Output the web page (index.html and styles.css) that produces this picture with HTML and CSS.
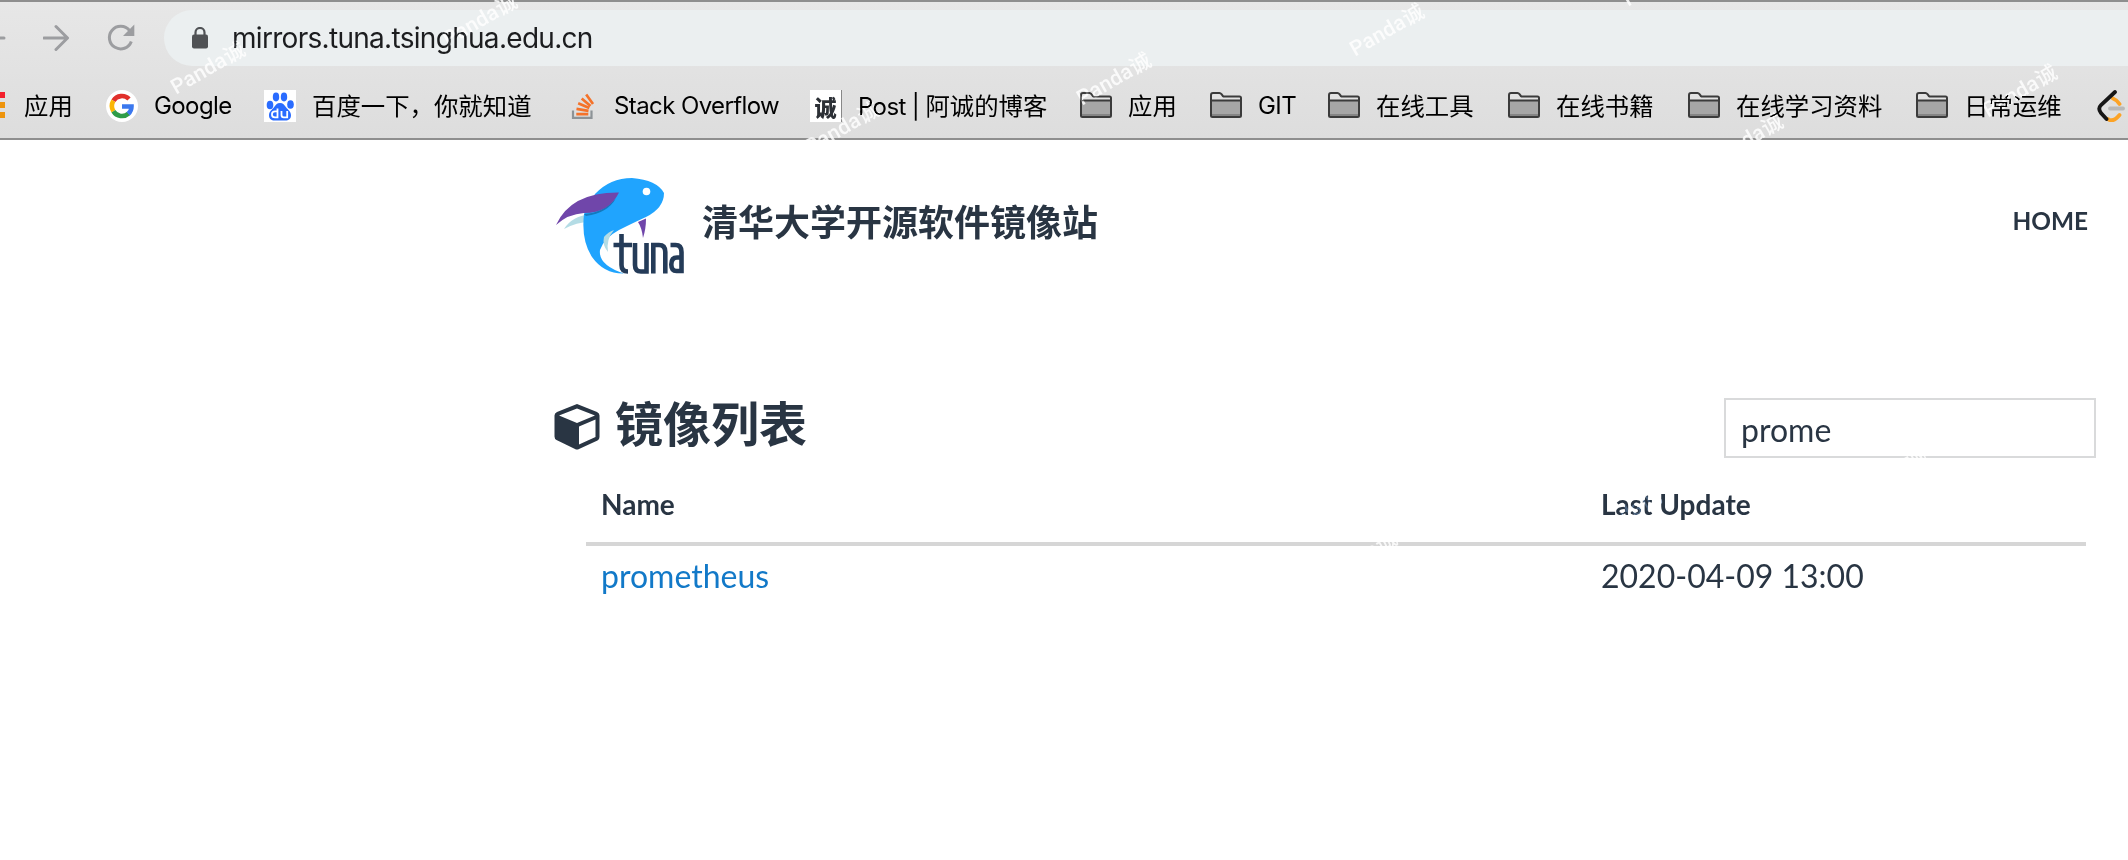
FILE: index.html
```html
<!DOCTYPE html>
<html lang="zh-CN">
<head>
<meta charset="utf-8">
<title>清华大学开源软件镜像站</title>
<link rel="stylesheet" href="styles.css">
</head>
<body>
<svg class="defs" width="0" height="0" aria-hidden="true">
  <defs>
    <symbol id="folder" viewBox="0 0 32 32">
      <path d="M1 27V4.500q0-1.500 1.500-1.500H10l3 3H29.500q1.500 0 1.500 1.500V27z" fill="#e3e3e3"/>
      <path d="M1 11H31V27H1z" fill="#a6a6a6"/>
      <path d="M1 24H31V27H1z" fill="#858585"/>
      <path d="M1 26V5q0-2 2-2h6.500q1 0 2 1.200l1.500 2q.4.300 1 .300H29.500q1.500 0 1.500 1.500V25.500q0 1.500-1.500 1.500H2.500Q1 27 1 25.500zM1 10.500H31" fill="none" stroke="#3b3b3b" stroke-width="2"/>
    </symbol>
  </defs>
</svg>
<header class="browser">
  <div class="toolbar">
    <svg class="nav-back" width="6" height="32" viewBox="0 0 6 32"><path d="M0 16H4" stroke="#9c9da0" stroke-width="3" stroke-linecap="round"/></svg>
    <svg class="nav-forward" width="28" height="28" viewBox="0 0 28 28" fill="none" stroke="#9c9da0" stroke-width="3" stroke-linecap="round" stroke-linejoin="round"><path d="M1 14H24M13 2.500L24.500 14L13 25.500"/></svg>
    <svg class="nav-reload" width="28" height="28" viewBox="0 0 28 28"><path d="M24.300 17.500A11.300 11.300 0 1 1 22.500 6.500" fill="none" stroke="#9c9da0" stroke-width="3"/><path d="M27.300.500V12H16z" fill="#9c9da0"/></svg>
    <div class="omnibox">
      <svg width="16" height="22" viewBox="0 0 16 22"><rect y="7.500" width="16" height="14" rx="2" fill="#505255"/><path d="M3.500 9V5.500a4.500 4.500 0 0 1 9 0V9" fill="none" stroke="#505255" stroke-width="2.200"/></svg>
      <span class="url">mirrors.tuna.tsinghua.edu.cn</span>
    </div>
  </div>
  <nav class="bookmarks">
    <a class="bookmark bookmark-apps"><svg width="5" height="28" viewBox="0 0 5 28"><path d="M0 0H5V6H0z" fill="#f3202c"/><path d="M0 10H5V16H0zM0 20H5V26H0z" fill="#ee940c"/></svg><span>应用</span></a>
    <a class="bookmark"><svg width="32" height="32" viewBox="0 0 32 32"><circle cx="16" cy="16" r="16" fill="#fff"/><g fill="none" stroke-width="4.600"><path d="M7.400 10.800A10 10 0 0 1 23 9" stroke="#e0302b"/><path d="M7.400 21.200A10 10 0 0 1 7.400 10.800" stroke="#fbb606"/><path d="M22.600 23.500A10 10 0 0 1 7.400 21.200" stroke="#2f9c48"/><path d="M16 16.500H25.500A10 10 0 0 1 22.300 23.800" stroke="#3b78ee"/></g></svg><span class="latin">Google</span></a>
    <a class="bookmark"><svg width="32" height="32" viewBox="0 0 32 32"><path d="M0 0H32V32H0z" fill="#fff"/><g fill="#2a6cff"><ellipse cx="6" cy="15" rx="3.300" ry="4.300"/><ellipse cx="12" cy="7" rx="3.200" ry="4.400"/><ellipse cx="20" cy="7" rx="3.200" ry="4.400"/><ellipse cx="26.500" cy="14.500" rx="3.300" ry="4.300"/><path d="M16 13c3 0 4.500 2 6 4.300 2 2.700 5 4.200 5 8 0 3.700-2.500 5.200-5.500 5.200H10.500c-3 0-5.500-1.500-5.500-5 0-4 3-5.500 5-8.200C11.500 15 13 13 16 13z"/></g><path d="M13.500 18.500V27.300H11q-3 0-3-2.600v-.800q0-2.600 3-2.600h2.500M17.500 21v4q0 2.300 2.200 2.300h3.500V21" fill="none" stroke="#fff" stroke-width="1.800"/></svg><span>百度一下，你就知道</span></a>
    <a class="bookmark bookmark-so"><svg width="32" height="32" viewBox="0 0 32 32"><path d="M5 20.500V27.800H23.500V20.500" fill="none" stroke="#8d9397" stroke-width="2.200"/><g stroke="#f4722a" stroke-width="2.700"><path d="M8.300 24.200H20.300M8.500 18.800L20.500 20.800M10.200 13.300L21.300 18M13.700 8.500L22.500 16M18.200 4.500L25 14"/></g></svg><span class="latin">Stack Overflow</span></a>
    <a class="bookmark"><span class="seal">诚</span><span><span class="latin">Post | </span>阿诚的博客</span></a>
    <a class="bookmark"><svg width="32" height="32"><use href="#folder"/></svg><span>应用</span></a>
    <a class="bookmark"><svg width="32" height="32"><use href="#folder"/></svg><span class="latin">GIT</span></a>
    <a class="bookmark"><svg width="32" height="32"><use href="#folder"/></svg><span>在线工具</span></a>
    <a class="bookmark"><svg width="32" height="32"><use href="#folder"/></svg><span>在线书籍</span></a>
    <a class="bookmark"><svg width="32" height="32"><use href="#folder"/></svg><span>在线学习资料</span></a>
    <a class="bookmark"><svg width="32" height="32"><use href="#folder"/></svg><span>日常运维</span></a>
    <a class="bookmark"><svg width="32" height="32" viewBox="0 0 32 32" fill="none" stroke-linecap="round" stroke-width="3.800"><path d="M17 8.500Q21 10 23.500 14M12 29Q17 33 23.500 25" stroke="#fca326"/><path d="M14 18.500H27" stroke="#b9b9b9"/><path d="M19 2L5 15Q1.500 18.500 5 23L10.500 29" stroke="#161616"/></svg></a>
  </nav>
</header>
<main class="page">
  <div class="site-head">
    <a class="brand">
      <svg class="logo" width="137" height="98" viewBox="0 0 137 98">
        <g transform="translate(0 2)">
          <path d="M16 51Q24 38 43 36L41 44Q29 44 16 51z" fill="#b4dce5"/>
          <path d="M47 16Q62 0 84 0 109 2 116 15 116 30 98 39 87 44 71 52 56 60 52 72 50 87 76 95.500 56 96 44 79 33 62 36 36z" fill="#20a4fe"/>
          <path d="M36 36Q55 35 68 20Q60 35 38 38z" fill="#1478bd"/>
          <path d="M8 47Q23 14 71 14.500 61 35 36 35 20 36 8 47z" fill="#7046aa"/>
          <path d="M56 59Q60 54 66 52 58 61 60 74 54 67 56 59z" fill="#b4dce5"/>
          <path d="M90 44L98 40.500Q98 51 95 60 94 50 90 44z" fill="#7046aa"/>
          <circle cx="98.500" cy="13.500" r="3.800" fill="#fff"/>
        </g>
        <g fill="none" stroke="#243b58" stroke-width="4.600"><path d="M73.500 58V89Q73.500 95.500 80 95.500M65.500 69H84"/><path d="M87 67V89Q87 95.500 93 95.500H98.500V67"/><path d="M105.300 97.500V69H111Q117.300 69 117.300 76V97.500"/><path d="M122.500 69H127.500Q133.500 69 133.500 76V95H128.500Q123.300 95 123.300 88.500 123.300 81.500 129 81.500H133.500"/></g>
      </svg>
      <h1>清华大学开源软件镜像站</h1>
    </a>
    <a class="home">HOME</a>
  </div>
  <div class="list-head">
    <h2><svg width="46" height="46" viewBox="0 0 46 46"><path fill-rule="evenodd" fill="#293543" d="M23 0L43 8Q45.500 9 45.500 11.500V33Q45.500 35.500 43.500 36.500L25 45Q23 46 21 45L2.500 36Q.500 35 .500 32.500V11.500Q.500 9 3 8zM23 4.500L5 11.500L23 19L41 11.500zM25 22.500V40.500L41.500 33V15.500z"/></svg><span>镜像列表</span></h2>
    <input class="search" type="text" value="prome" aria-label="Search">
  </div>
  <table class="mirrors">
    <thead><tr><th class="col-name">Name</th><th>Last Update</th></tr></thead>
    <tbody><tr><td><a>prometheus</a></td><td>2020-04-09 13:00</td></tr></tbody>
  </table>
</main>
<div class="watermarks" aria-hidden="true">
  <span style="left:208px;top:68px">Panda诚</span>
  <span style="left:480px;top:20px">Panda诚</span>
  <span style="left:842px;top:128px">Panda诚</span>
  <span style="left:1114px;top:79px">Panda诚</span>
  <span style="left:1387px;top:30px">Panda诚</span>
  <span style="left:1660px;top:-20px">Panda诚</span>
  <span style="left:1746px;top:140px">Panda诚</span>
  <span style="left:2020px;top:91px">Panda诚</span>
  <span style="left:1360px;top:557px">Panda诚</span>
  <span style="left:1624px;top:515px">Panda诚</span>
  <span style="left:1888px;top:472px">Panda诚</span>
</div>
</body>
</html>
```
FILE: styles.css
```css
* { box-sizing: border-box; }
body {
  margin: 0;
  width: 2128px;
  height: 860px;
  overflow: hidden;
  position: relative;
  background: #fff;
  color: #293543;
  font-family: Lato, "Noto Sans CJK SC", sans-serif;
}
.defs { position: absolute; }
svg { display: block; flex: none; }

.browser {
  height: 140px;
  border-top: 2px solid #8e8e8e;
  border-bottom: 2px solid #8e8e8e;
  background: linear-gradient(#e7e7e7, #dddddd);
  font-family: Inter, "Noto Sans CJK SC", sans-serif;
  color: #000;
}
.toolbar { display: flex; align-items: center; height: 72px; }
.nav-forward { margin-left: 37px; }
.nav-reload { margin-left: 36px; }
.omnibox {
  flex: 1;
  display: flex;
  align-items: center;
  gap: 24px;
  height: 56px;
  margin-left: 29px;
  padding-left: 28px;
  border-radius: 28px 0 0 28px;
  background: #ebeff0;
}
.url { font-size: 28px; line-height: 56px; letter-spacing: -0.7px; color: #1c1d1f; }

.bookmarks {
  display: grid;
  grid-template-columns: 106px 158px 304px 242px 270px 130px 118px 180px 180px 228px 180px 32px;
  align-items: center;
  height: 64px;
  font-size: 24.4px;
  line-height: 32px;
}
.bookmark { display: flex; align-items: center; gap: 16px; height: 64px; white-space: nowrap; }
.bookmark-apps { gap: 19px; }
.bookmark-so { gap: 14px; }
.latin { font-size: 24px; letter-spacing: -0.6px; }
.seal {
  flex: none;
  width: 32px;
  height: 32px;
  background: #fff;
  border-right: 1px solid #888;
  text-align: center;
  font: 900 22px/32px "Noto Sans CJK SC", sans-serif;
  color: #2c3036;
}

.page { padding: 36px 32px 0 548px; }
.site-head { display: flex; align-items: center; justify-content: space-between; padding-right: 8px; height: 98px; }
.brand { display: flex; align-items: center; gap: 17px; }
.brand h1 { margin: 0 0 7px; font-size: 36px; line-height: 50px; font-weight: 700; }
.home { margin-bottom: 9px; font-size: 24.4px; font-weight: 700; }
.list-head { display: flex; justify-content: space-between; align-items: flex-start; margin-top: 124px; padding-left: 6px; }
.list-head h2 { display: flex; align-items: center; gap: 15px; margin: 0; height: 60px; font-size: 48px; line-height: 60px; font-weight: 700; }
.list-head h2 svg { margin-bottom: 3px; }
.list-head h2 span { margin-bottom: 8px; }
.search {
  width: 372px;
  height: 60px;
  padding: 7px 15px 5px;
  border: 2px solid #d9dadb;
  border-radius: 0;
  background: #fff;
  font: 32px Lato, sans-serif;
  color: #293543;
}
.mirrors { width: 1500px; margin: 14px 0 0 38px; border-collapse: collapse; table-layout: fixed; text-align: left; }
.mirrors th { height: 72px; padding: 0 15px 6px; border-bottom: 4px solid #d6d6d6; font-size: 28px; font-weight: 700; }
.mirrors td { height: 61px; padding: 0 15px; font-size: 32px; }
.mirrors a { color: #1279c8; }
.col-name { width: 1000px; }

.watermarks { position: absolute; inset: 0; overflow: hidden; pointer-events: none; mix-blend-mode: overlay; }
.watermarks span {
  position: absolute;
  transform: translate(-50%, -50%) rotate(-30deg);
  color: rgba(255, 255, 255, .85);
  font: 500 21px/24px Roboto, "Noto Sans CJK SC", sans-serif;
  letter-spacing: 0.3px;
  white-space: nowrap;
}
```
